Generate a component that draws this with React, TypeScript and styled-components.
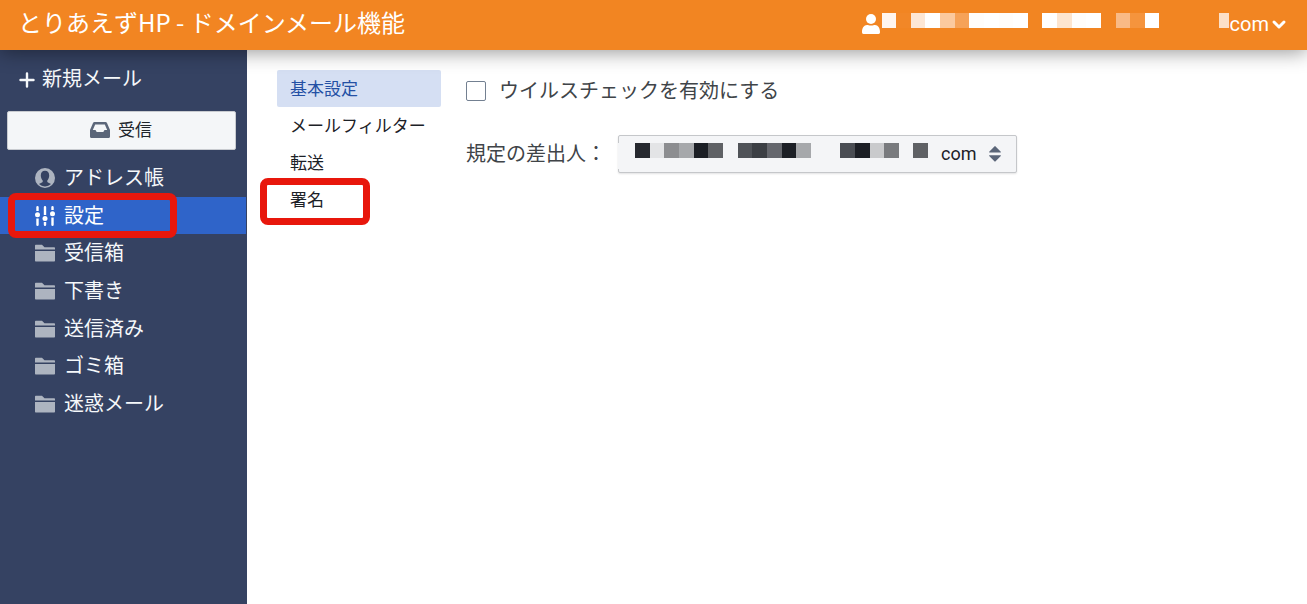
import React from "react";
import styled, { createGlobalStyle } from "styled-components";

const GlobalStyle = createGlobalStyle`
  * { box-sizing: border-box; }
  body {
    margin: 0;
    background: #fff;
    color: #404448;
    font-family: Roboto, "Noto Sans CJK JP", sans-serif;
    font-size: 20px;
    line-height: 24px;
  }
  button, select, input { font: inherit; }
`;

const Page = styled.div`
  display: flex;
  flex-direction: column;
  min-height: 100vh;
`;

const Header = styled.header`
  position: relative;
  z-index: 1;
  display: flex;
  align-items: center;
  justify-content: space-between;
  height: 50px;
  padding: 0 20px 0 18px;
  background: #f28522;
  color: #fff;
  box-shadow: 0 2px 20px rgba(0, 0, 0, 0.42);
`;

const Title = styled.h1`
  margin: 0 0 6px;
  font-family: "Noto Sans CJK JP", sans-serif;
  font-size: 24px;
  font-weight: 400;
  line-height: 32px;
`;

const Account = styled.button`
  display: flex;
  align-items: flex-start;
  height: 24px;
  padding: 0;
  border: 0;
  background: none;
  color: inherit;
  line-height: 22px;
  cursor: pointer;
  svg { display: block; }
`;

const Mosaic = styled.span<{ $width: number }>`
  display: flex;
  width: ${(p) => p.$width}px;
  height: 15px;
`;

const Cell = styled.span<{ $color: string }>`
  flex: 1;
  background: ${(p) => p.$color};
`;

const HiddenHost = styled.span`
  width: 10px;
  height: 15px;
  margin: 0 1px 0 59px;
  background: #fce0c9;
`;

const Body = styled.div`
  display: flex;
  flex: 1;
`;

const Sidebar = styled.aside`
  flex: 0 0 247px;
  background: #354262;
  color: #f5f8fa;
`;

const Compose = styled.button`
  display: flex;
  align-items: center;
  gap: 7px;
  margin: 14px 0 0 19px;
  padding: 0;
  border: 0;
  background: none;
  color: inherit;
  line-height: 30px;
  cursor: pointer;
  svg { margin-top: 2px; }
`;

const Receive = styled.button`
  display: flex;
  align-items: center;
  justify-content: center;
  gap: 8px;
  width: 229px;
  height: 39px;
  margin: 17px 0 9px 7px;
  padding: 0 1px 2px 0;
  border: 1px solid #c8cbd0;
  border-radius: 2px;
  background: #f4f6f8;
  color: #20252b;
  font-size: 17px;
  cursor: pointer;
`;

const Folders = styled.nav`
  display: grid;
  grid-auto-rows: 1fr;
  min-height: 264px;
`;

const Folder = styled.a<{ $active?: boolean }>`
  position: relative;
  display: flex;
  align-items: center;
  gap: 9px;
  margin-right: 1px;
  padding-left: 35px;
  background: ${(p) => (p.$active ? "#2f64c9" : "transparent")};
  color: ${(p) => (p.$active ? "#fff" : "inherit")};
  text-decoration: none;
  svg { flex: none; color: ${(p) => (p.$active ? "#fff" : "#adb4c0")}; }
`;

const Main = styled.main`
  display: flex;
  flex: 1;
  align-items: flex-start;
  gap: 25px;
  padding: 20px 30px;
`;

const Tabs = styled.nav`
  display: grid;
  grid-auto-rows: 1fr;
  flex: 0 0 164px;
  min-height: 149px;
`;

const Tab = styled.a<{ $active?: boolean }>`
  position: relative;
  display: flex;
  align-items: center;
  padding-left: 13px;
  border-radius: 2px;
  background: ${(p) => (p.$active ? "#d5dff3" : "transparent")};
  color: ${(p) => (p.$active ? "#2450a4" : "#1c2127")};
  font-size: 17px;
  text-decoration: none;
  white-space: nowrap;
`;

const Highlight = styled.span<{ $left: number; $width: number; $height: number }>`
  position: absolute;
  top: -4px;
  left: ${(p) => p.$left}px;
  width: ${(p) => p.$width}px;
  height: ${(p) => p.$height}px;
  border: 7px solid #e8170c;
  border-radius: 8px;
  pointer-events: none;
`;

const Form = styled.form`
  display: flex;
  flex: 1;
  flex-direction: column;
  gap: 25px;
`;

const CheckLabel = styled.label`
  display: flex;
  align-items: center;
  gap: 13px;
  height: 40px;
  padding-top: 2px;
`;

const Checkbox = styled.input`
  appearance: none;
  width: 20px;
  height: 20px;
  margin: 0;
  border: 1px solid #738091;
  border-radius: 2px;
  background: #fff;
  &:checked { background: #2f64c9; }
`;

const Field = styled.div`
  display: flex;
  align-items: center;
  gap: 12px;
  label { width: 140px; white-space: nowrap; }
`;

const SelectBox = styled.div`
  position: relative;
  width: 399px;
  svg { position: absolute; top: 11px; right: 16px; pointer-events: none; }
`;

const Select = styled.select`
  display: block;
  appearance: none;
  width: 100%;
  height: 38px;
  padding: 0 40px 0 322px;
  border: 1px solid #c5c7ca;
  border-radius: 2px;
  background: #f4f5f7;
  box-shadow: 0 1px 2px rgba(17, 20, 24, 0.12);
  color: #1c2127;
  font-size: 18px;
`;

const SelectMosaic = styled.span`
  position: absolute;
  top: 8px;
  left: 0;
  display: flex;
  gap: 15px;
  pointer-events: none;
`;

const EdgeCover = styled.span`
  width: 2px;
  height: 26px;
  background: #f4f5f7;
`;

const none = "transparent";
const accountCells = [
  "#fff5ee", "#f28727", "#fde7d5", "#fff", "#fbc99e", "#f6a258", "#fffdfb",
  "#fff", "#fffdfb", "#fff", none, "#fff", "#fde5cf", "#fffdfb", "#fff",
  none, "#f9ba86", "#f5943d", "#fff",
];
const senderCells = [
  "#26292f", "#e3e4e6", "#8c8d90", "#a6a8ab", "#1c1f25", "#5f6165", none,
  "#505358", "#3c3f44", "#65676d", "#1c1f25", "#a6a8ab", none, none,
  "#4a4d53", "#1c1f25", "#c9cacc", "#797b7e", none, "#5f6165",
];

const PersonIcon = () => (
  <svg width="20" height="24" viewBox="0 0 20 24" fill="currentColor" aria-hidden="true">
    <circle cx="9" cy="6" r="5" />
    <path d="M0 19c0-4 2-7 5-7 1 0 2 .6 4 .6s3-.6 4-.6c3 0 5 3 5 7 0 1-.4 2-1.500 2h-15C.4 21 0 20 0 19Z" />
  </svg>
);

const ChevronIcon = () => (
  <svg width="18" height="24" viewBox="0 0 18 24" fill="none" stroke="currentColor" strokeWidth="3" strokeLinecap="round" strokeLinejoin="round" aria-hidden="true">
    <path d="m5 9 5 5 5-5" />
  </svg>
);

const PlusIcon = () => (
  <svg width="16" height="16" viewBox="0 0 16 16" stroke="currentColor" strokeWidth="2.4" strokeLinecap="round" aria-hidden="true">
    <path d="M8 1.500v13M1.500 8h13" />
  </svg>
);

const InboxIcon = () => (
  <svg width="20" height="16" viewBox="0 0 20 16" fill="#5b6679" fillRule="evenodd" aria-hidden="true">
    <path d="M4.500 0h11c.7 0 1.200.4 1.500 1l3 7v6.500c0 .8-.6 1.500-1.400 1.500H1.400C.6 16 0 15.300 0 14.500V8l3-7c.3-.6.8-1 1.500-1Zm.7 2.500L2.800 8h2.700l1.200 2h6.600l1.200-2h2.700l-2.400-5.500Z" />
  </svg>
);

const UserIcon = () => (
  <svg width="20" height="20" viewBox="0 0 20 20" fill="currentColor" fillRule="evenodd" aria-hidden="true">
    <path d="M10 0a10 10 0 1 0 0 20 10 10 0 0 0 0-20ZM10 2.800c2.700 0 4.200 1.900 4.200 4.700 0 2.200-.8 3.800-1.900 5v1.600c.8.900 2.500 1.200 3.700 2A8.500 8.500 0 0 1 10 18.500 8.500 8.500 0 0 1 4 16.100c1.200-.8 2.900-1.100 3.700-2v-1.600c-1.100-1.200-1.900-2.800-1.900-5 0-2.800 1.500-4.700 4.200-4.700Z" />
  </svg>
);

const SlidersIcon = () => (
  <svg width="20" height="20" viewBox="0 0 20 20" fill="currentColor" aria-hidden="true">
    <path d="M1.300 1.200a1.200 1.200 0 0 1 2.400 0V5H1.300ZM1.300 12.500h2.400v6.300a1.200 1.200 0 0 1-2.400 0ZM8.800 1.200a1.200 1.200 0 0 1 2.400 0V9H8.800ZM8.800 16h2.400v2.800a1.200 1.200 0 0 1-2.400 0ZM16.300 1.200a1.200 1.200 0 0 1 2.400 0V4h-2.400ZM16.300 11.500h2.400v7.300a1.200 1.200 0 0 1-2.400 0Z" />
    <circle cx="2.500" cy="8.800" r="2.500" />
    <circle cx="10" cy="12.500" r="2.500" />
    <circle cx="17.500" cy="7.700" r="2.500" />
  </svg>
);

const FolderIcon = () => (
  <svg width="20" height="18" viewBox="0 0 20 18" fill="currentColor" aria-hidden="true">
    <path d="M0 1.500C0 1 .5.800 1 .800h6l2.500 2.400H19c.6 0 1 .4 1 1v1.300H0ZM0 7h20v9.500c0 .6-.4 1-1 1H1c-.6 0-1-.4-1-1Z" />
  </svg>
);

const SortIcon = () => (
  <svg width="12" height="16" viewBox="0 0 12 16" fill="#5b6679" aria-hidden="true">
    <path d="M.5 6.500h11c.5 0 .6-.5.3-.8L6.600.4a.8.8 0 0 0-1.200 0L.2 5.700c-.3.300-.2.800.3.800ZM.5 9.200h11c.5 0 .6.500.3.800l-5.200 5.300a.8.8 0 0 1-1.200 0L.2 10c-.3-.300-.2-.800.3-.800Z" />
  </svg>
);

const mailFolders = ["受信箱", "下書き", "送信済み", "ゴミ箱", "迷惑メール"];

export default function App() {
  return (
    <Page>
      <GlobalStyle />
      <Header>
        <Title>とりあえずHP - ドメインメール機能</Title>
        <Account type="button">
          <PersonIcon />
          <Mosaic $width={278}>
            {accountCells.map((color, i) => <Cell key={i} $color={color} />)}
          </Mosaic>
          <HiddenHost />
          com
          <ChevronIcon />
        </Account>
      </Header>
      <Body>
        <Sidebar>
          <Compose type="button"><PlusIcon />新規メール</Compose>
          <Receive type="button"><InboxIcon />受信</Receive>
          <Folders>
            <Folder href="#contacts"><UserIcon />アドレス帳</Folder>
            <Folder href="#settings" $active>
              <SlidersIcon />設定
              <Highlight $left={8} $width={169} $height={45} />
            </Folder>
            {mailFolders.map((name) => (
              <Folder key={name} href={`#${name}`}><FolderIcon />{name}</Folder>
            ))}
          </Folders>
        </Sidebar>
        <Main>
          <Tabs>
            <Tab href="#basic" $active>基本設定</Tab>
            <Tab href="#filter">メールフィルター</Tab>
            <Tab href="#forward">転送</Tab>
            <Tab href="#signature">
              署名
              <Highlight $left={-17} $width={110} $height={47} />
            </Tab>
          </Tabs>
          <Form>
            <CheckLabel>
              <Checkbox type="checkbox" />
              ウイルスチェックを有効にする
            </CheckLabel>
            <Field>
              <label htmlFor="sender">規定の差出人：</label>
              <SelectBox>
                <Select id="sender" defaultValue="com">
                  <option value="com">com</option>
                </Select>
                <SelectMosaic>
                  <EdgeCover />
                  <Mosaic $width={293}>
                    {senderCells.map((color, i) => <Cell key={i} $color={color} />)}
                  </Mosaic>
                </SelectMosaic>
                <SortIcon />
              </SelectBox>
            </Field>
          </Form>
        </Main>
      </Body>
    </Page>
  );
}
